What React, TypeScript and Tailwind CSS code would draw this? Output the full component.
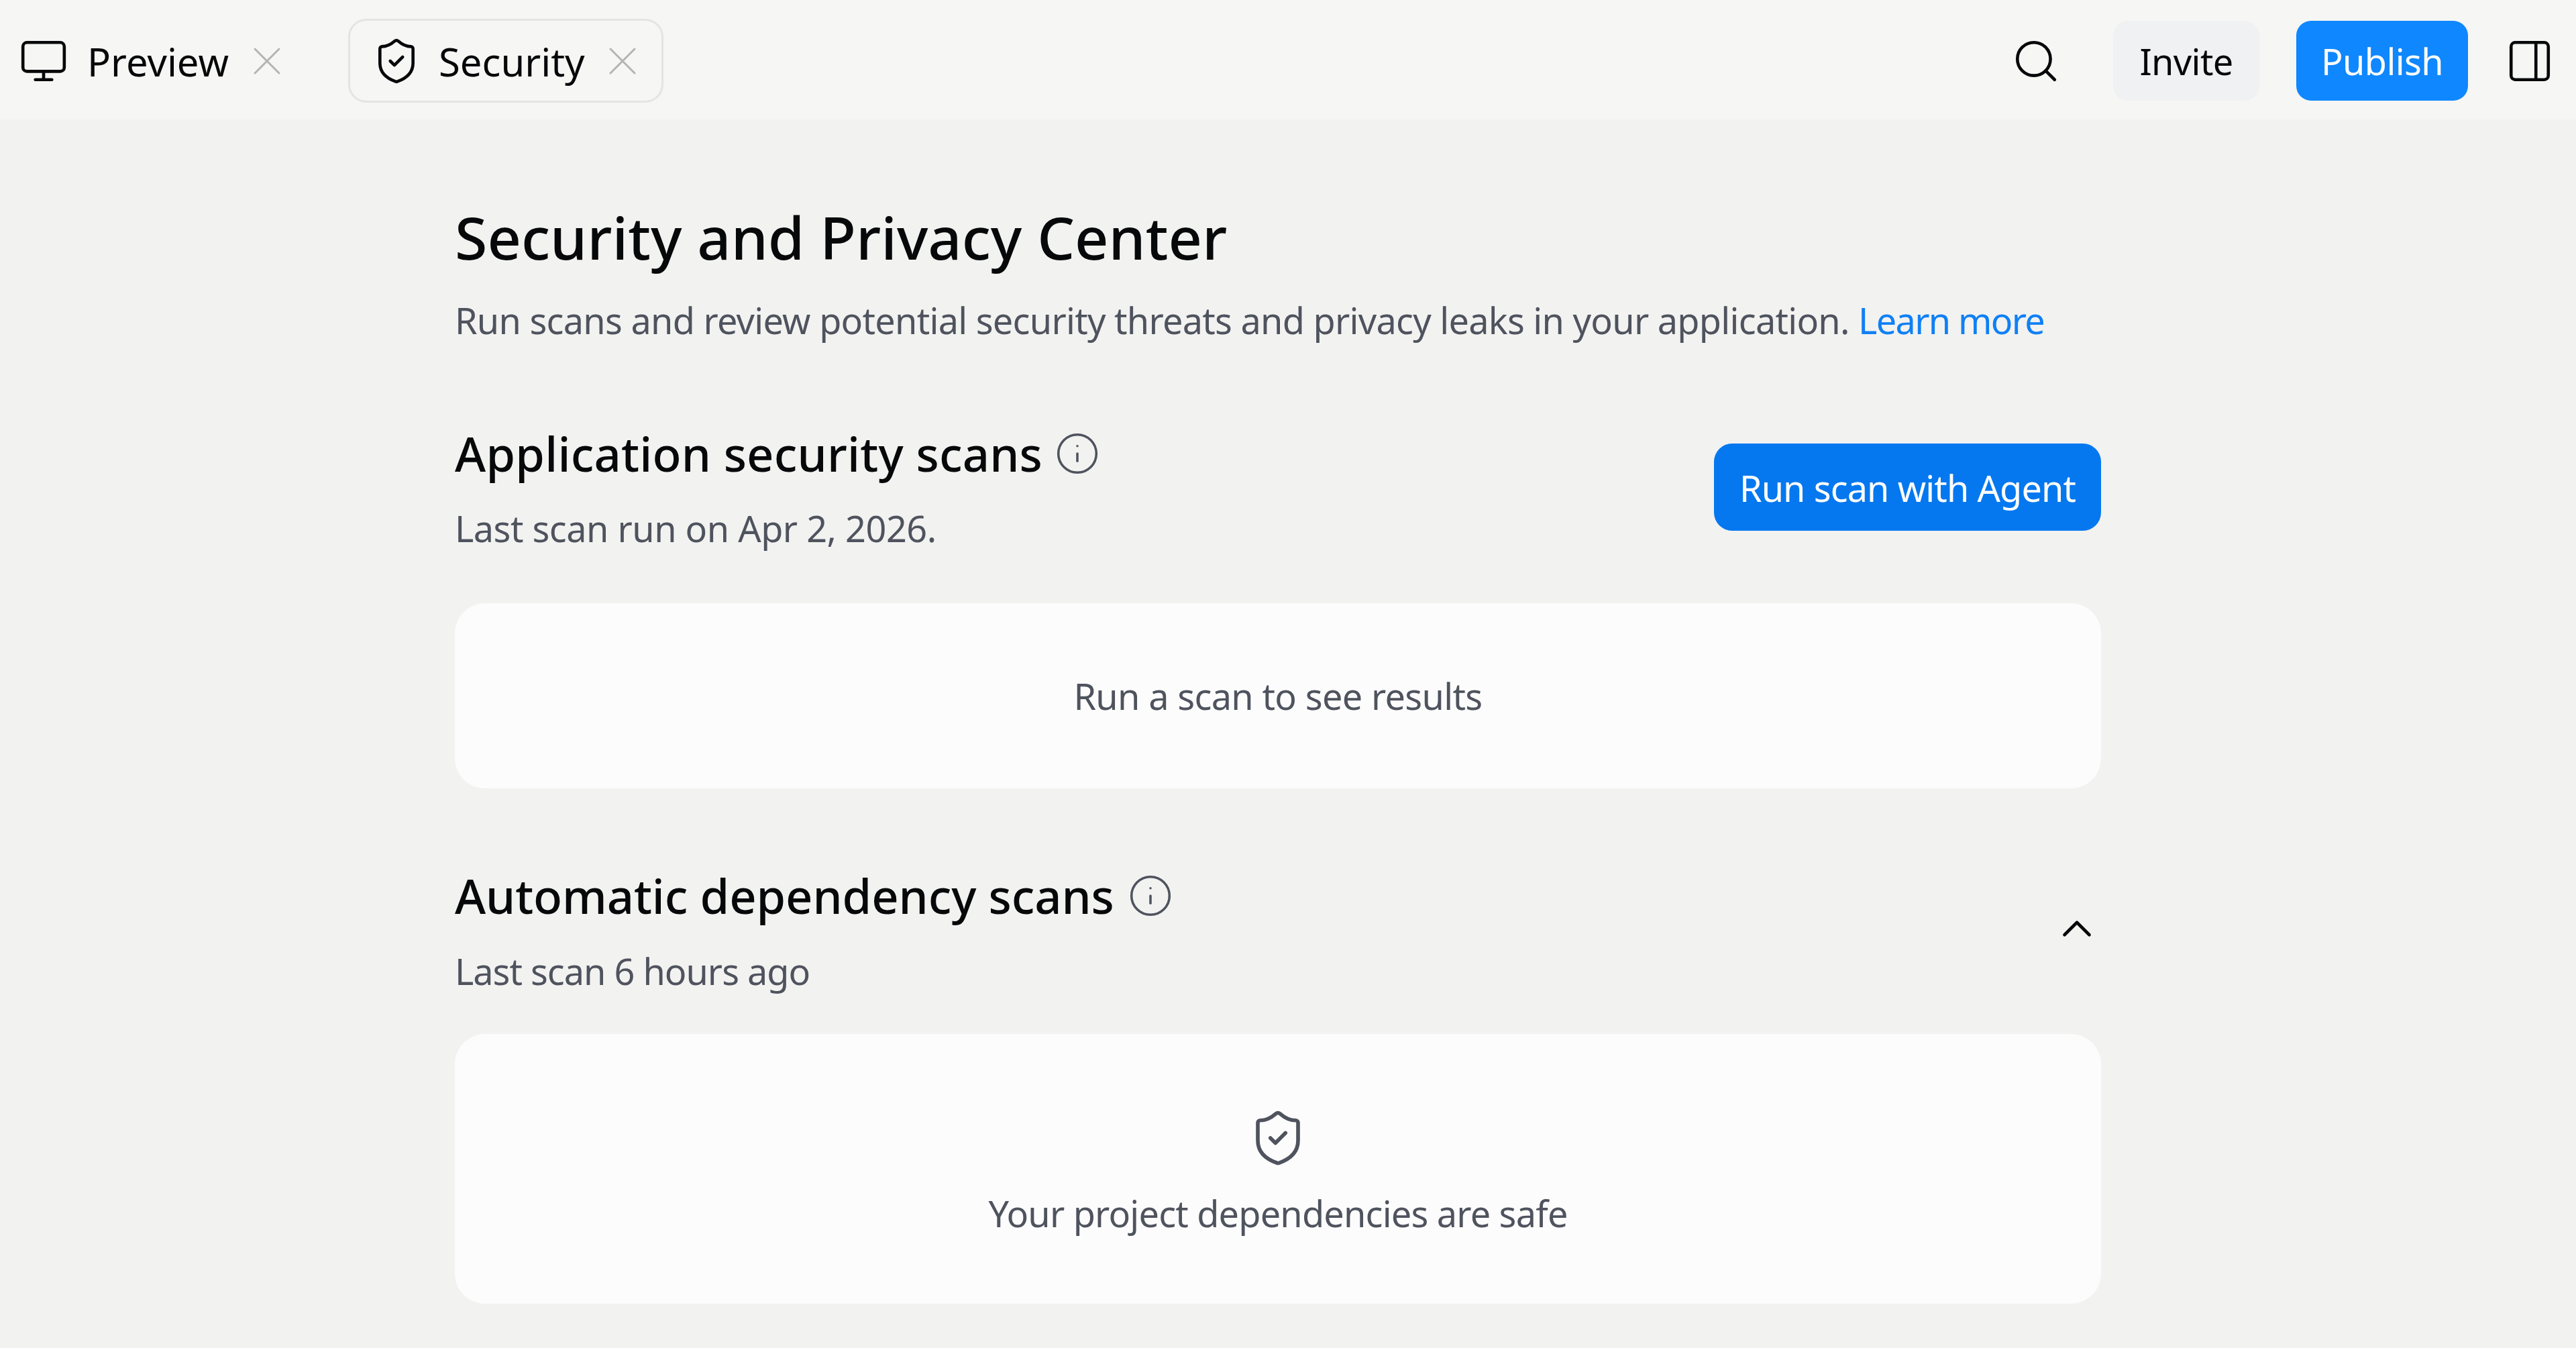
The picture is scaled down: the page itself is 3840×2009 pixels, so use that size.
// App.tsx
import React from "react";
import { ChevronUp, Info, Monitor, PanelRight, Search, ShieldCheck, X } from "lucide-react";

const App: React.FC = () => (
  <div className="min-h-[2009px] bg-[#f2f2f0] font-['Noto_Sans',sans-serif] text-[#07080a]">
    {/* top bar */}
    <header className="flex h-[178px] items-center justify-between bg-[#f6f6f4] pl-[28px] pr-[32px] pt-[3px]">
      <div className="flex items-center">
        <div className="flex items-center">
          <Monitor className="h-[74px] w-[74px]" strokeWidth={1.5} />
          <span className="ml-[28px] mt-[2px] text-[58px] leading-[80px]">Preview</span>
          <X className="ml-[21px] h-[72px] w-[72px] text-[#b4b4b2]" strokeWidth={1} />
        </div>
        <div className="ml-[85px] flex h-[125px] w-[470px] items-center rounded-[27px] border-[3px] border-[#e4e4e2] pl-[32px]">
          <ShieldCheck className="h-[74px] w-[74px]" strokeWidth={1.5} />
          <span className="ml-[26px] mt-[2px] text-[58px] leading-[80px]">Security</span>
          <X className="ml-[20px] h-[72px] w-[72px] text-[#b4b4b2]" strokeWidth={1} />
        </div>
      </div>
      <div className="flex items-center">
        <Search className="h-[74px] w-[74px]" strokeWidth={1.5} />
        <button className="ml-[78px] h-[119px] w-[218px] rounded-[22px] bg-[#f0f1f2] pt-[2px] text-[54px] tracking-[-0.65px]">Invite</button>
        <button className="ml-[55px] h-[119px] w-[256px] rounded-[22px] bg-[#0f87ff] pt-[2px] text-[54px] tracking-[-0.65px] text-[#fcfcfc]">Publish</button>
        <PanelRight className="ml-[55px] h-[74px] w-[74px]" strokeWidth={1.5} />
      </div>
    </header>

    <main className="ml-[678px] w-[2454px] pt-[115px]">
      <h1 className="text-[88px] font-medium leading-[120px]">Security and Privacy Center</h1>
      <p className="mt-[24px] whitespace-nowrap text-[54px] leading-[80px] tracking-[-0.73px] text-[#4f535e]">
        Run scans and review potential security threats and privacy leaks in your application.{" "}
        <span className="tracking-[-1.65px] text-[#0f80f5]">Learn more</span>
      </p>

      {/* application scans */}
      <section className="mt-[111px] flex items-center justify-between">
        <div>
          <div className="flex items-center">
            <h2 className="text-[70.5px] font-medium leading-[96px] tracking-[0.2px]">Application security scans</h2>
            <Info className="ml-[18px] h-[68px] w-[68px] text-[#4f535e]" strokeWidth={1.25} />
          </div>
          <p className="mt-[23px] text-[54px] leading-[80px] tracking-[-0.5px] text-[#4f535e]">Last scan run on Apr 2, 2026.</p>
        </div>
        <button className="-mt-[3px] h-[130px] w-[577px] rounded-[27px] bg-[#0578f0] pt-[2px] text-[54px] tracking-[-0.9px] text-[#fcfcfc]">Run scan with Agent</button>
      </section>
      <div className="mt-[72px] flex h-[276px] items-center justify-center rounded-[45px] bg-[#fcfcfc] text-[54px] tracking-[-0.65px] text-[#4f535e]">
        Run a scan to see results
      </div>

      {/* dependency scans */}
      <section className="mt-[112px] flex items-center justify-between">
        <div>
          <div className="flex items-center">
            <h2 className="text-[70.5px] font-medium leading-[96px] tracking-[-0.1px]">Automatic dependency scans</h2>
            <Info className="ml-[20px] h-[68px] w-[68px] text-[#4f535e]" strokeWidth={1.25} />
          </div>
          <p className="mt-[24px] text-[54px] leading-[80px] tracking-[-1px] text-[#4f535e]">Last scan 6 hours ago</p>
        </div>
        <ChevronUp className="mb-[6px] mr-[-1px] h-[74px] w-[74px]" strokeWidth={1.5} />
      </section>
      <div className="mt-[54px] flex h-[402px] flex-col items-center rounded-[45px] bg-[#fcfcfc] pt-[110px] text-[#4f535e]">
        <ShieldCheck className="h-[90px] w-[90px]" strokeWidth={1.5} />
        <p className="mt-[27px] text-[54px] leading-[80px] tracking-[-0.8px]">Your project dependencies are safe</p>
      </div>
    </main>
  </div>
);

export default App;
